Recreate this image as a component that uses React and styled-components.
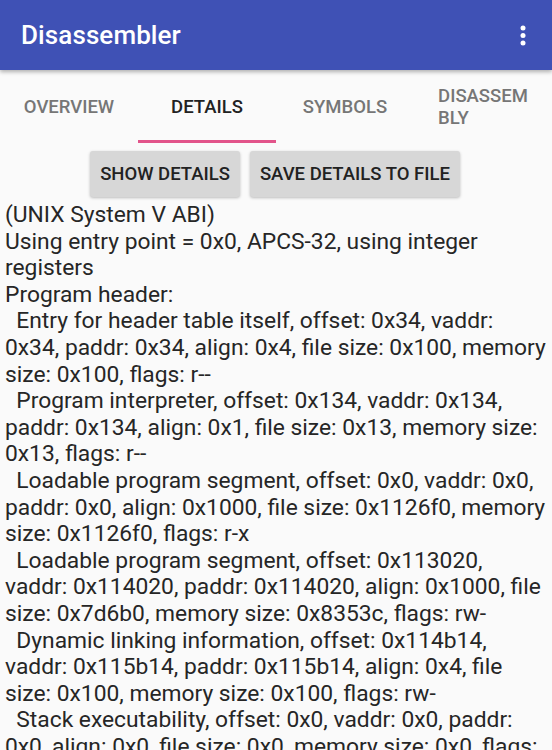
import React, { useState } from "react";
import styled, { createGlobalStyle } from "styled-components";

const GlobalStyle = createGlobalStyle`
  html, body {
    margin: 0;
    padding: 0;
    background: #fafafa;
    font-family: Roboto, "Noto Sans", sans-serif;
  }
`;

const lines = [
  "(UNIX System V ABI)",
  "Using entry point = 0x0, APCS-32, using integer registers",
  "Program header:",
  "  Entry for header table itself, offset: 0x34, vaddr: 0x34, paddr: 0x34, align: 0x4, file size: 0x100, memory size: 0x100, flags: r--",
  "  Program interpreter, offset: 0x134, vaddr: 0x134, paddr: 0x134, align: 0x1, file size: 0x13, memory size: 0x13, flags: r--",
  "  Loadable program segment, offset: 0x0, vaddr: 0x0, paddr: 0x0, align: 0x1000, file size: 0x1126f0, memory size: 0x1126f0, flags: r-x",
  "  Loadable program segment, offset: 0x113020, vaddr: 0x114020, paddr: 0x114020, align: 0x1000, file size: 0x7d6b0, memory size: 0x8353c, flags: rw-",
  "  Dynamic linking information, offset: 0x114b14, vaddr: 0x115b14, paddr: 0x115b14, align: 0x4, file size: 0x100, memory size: 0x100, flags: rw-",
  "  Stack executability, offset: 0x0, vaddr: 0x0, paddr: 0x0, align: 0x0, file size: 0x0, memory size: 0x0, flags: rw-",
];

const tabs = ["OVERVIEW", "DETAILS", "SYMBOLS", "DISASSEMBLY"];

export default function App() {
  const [active, setActive] = useState(1);
  return (
    <Page>
      <GlobalStyle />
      <AppBar>
        <Title>Disassembler</Title>
        <MenuButton aria-label="more">
          <svg width="6" height="21" viewBox="0 0 6 21">
            <circle cx="3" cy="3" r="2.5" fill="#fff" />
            <circle cx="3" cy="10.5" r="2.5" fill="#fff" />
            <circle cx="3" cy="18" r="2.5" fill="#fff" />
          </svg>
        </MenuButton>
      </AppBar>
      <TabBar>
        {tabs.map((t, i) => (
          <Tab key={t} active={i === active} onClick={() => setActive(i)}>
            <span>{t.length > 10 ? <>DISASSEM<br />BLY</> : t}</span>
          </Tab>
        ))}
      </TabBar>
      <Actions>
        <Button>SHOW DETAILS</Button>
        <Button>SAVE DETAILS TO FILE</Button>
      </Actions>
      <Details>{lines.join("\n")}</Details>
    </Page>
  );
}

const Page = styled.div`
  width: 552px;
  height: 750px;
  overflow: hidden;
  background: #fafafa;
`;

const AppBar = styled.header`
  position: relative;
  z-index: 2;
  height: 70px;
  background: #3f51b5;
  display: flex;
  align-items: center;
  justify-content: space-between;
  padding: 0 26px 0 21px;
  box-shadow: 0 2px 4px rgba(0, 0, 0, 0.3);
`;

const Title = styled.h1`
  margin: 0;
  color: #fff;
  font-size: 26px;
  font-weight: 500;
  letter-spacing: 0.1px;
`;

const MenuButton = styled.button`
  background: none;
  border: none;
  padding: 0;
  display: flex;
`;

const TabBar = styled.nav`
  height: 73px;
  display: grid;
  grid-template-columns: repeat(4, 1fr);
  background: #fafafa;
`;

const Tab = styled.div`
  display: flex;
  align-items: center;
  justify-content: center;
  box-sizing: border-box;
  padding-top: 3px;
  border-bottom: 3px solid ${({ active }) => (active ? "#e2548a" : "transparent")};
  color: ${({ active }) => (active ? "#222" : "#767676")};
  font-size: 18.5px;
  font-weight: 500;
  line-height: 22px;
  span {
    text-align: left;
  }
`;

const Actions = styled.div`
  display: flex;
  justify-content: center;
  gap: 10px;
  padding: 8px 2px 5px 0;
`;

const Button = styled.button`
  height: 46px;
  padding: 0 10px;
  background: #d7d7d7;
  border: none;
  border-radius: 3px;
  box-shadow: 0 1px 3px rgba(0, 0, 0, 0.25);
  color: #222;
  font-family: Roboto, sans-serif;
  font-size: 18.5px;
  font-weight: 500;
`;

const Details = styled.pre`
  margin: 0;
  padding: 0 4px 0 5px;
  white-space: pre-wrap;
  font-family: Roboto, "Noto Sans", sans-serif;
  font-size: 22.8px;
  line-height: 26.6px;
  color: #262626;
`;
